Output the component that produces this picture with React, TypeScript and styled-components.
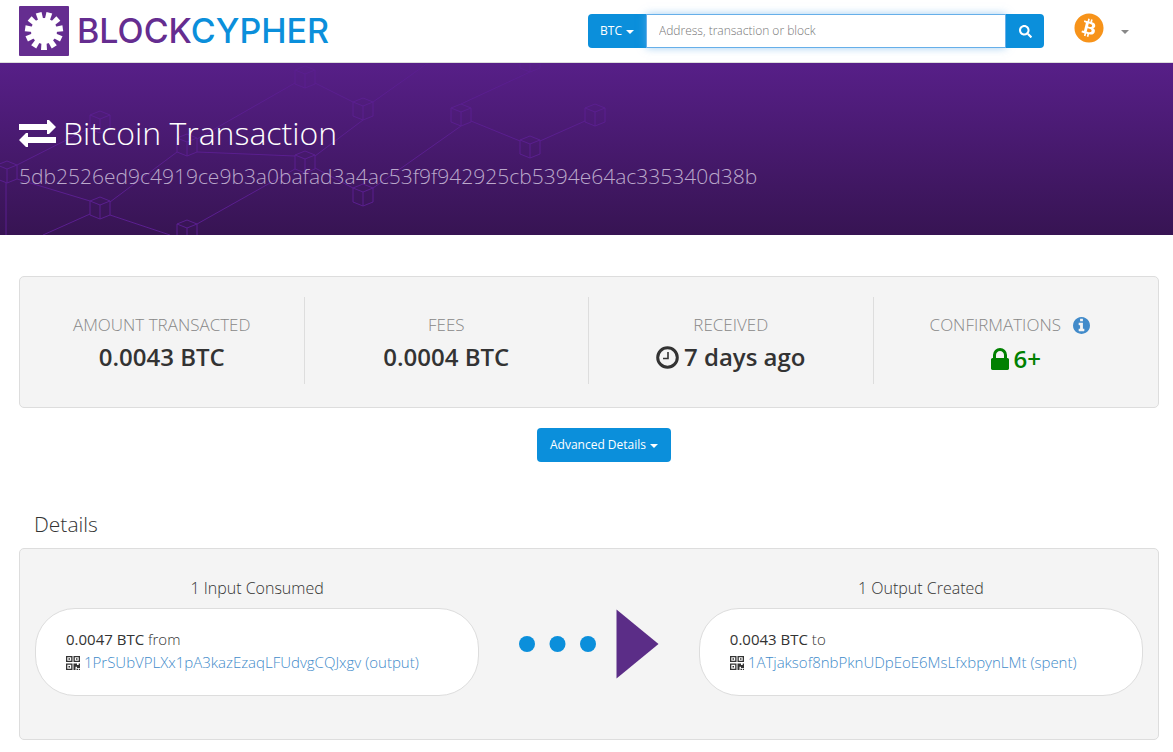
import React from "react";
import styled, { createGlobalStyle } from "styled-components";
import { FaBitcoin, FaSearch } from "react-icons/fa";

const blue = "#0b8fdb";
const purple = "#5b2d87";
const line = "#dddddd";
const link = "#428bca";

const GlobalStyle = createGlobalStyle`
  *, *::before, *::after { box-sizing: border-box; }
  body {
    margin: 0;
    background: #ffffff;
    color: #333333;
    font-family: "Open Sans", "Noto Sans", sans-serif;
    font-size: 15px;
    font-weight: 300;
    line-height: 22px;
  }
  h1, h2, h3, p, dl, dt, dd { margin: 0; font-weight: 300; }
  button, input { font: inherit; }
  a { color: ${link}; text-decoration: none; }
  svg { display: block; flex: none; }
`;

const Header = styled.header`
  display: flex;
  align-items: flex-start;
  height: 63px;
  padding: 6px 44px 0 19px;
  border-bottom: 1px solid ${line};
`;

const Brand = styled.a`
  display: flex;
  align-items: center;
  gap: 8px;
  margin-right: auto;
`;

const BrandName = styled.span`
  color: #652d90;
  font-family: Inter, sans-serif;
  font-size: 34px;
  font-weight: 500;
  line-height: 50px;
  white-space: nowrap;

  span { color: ${blue}; }
`;

const SearchForm = styled.form`
  display: flex;
  width: 456px;
  height: 34px;
  margin: 8px 30px 0 20px;
`;

const Button = styled.button`
  display: inline-flex;
  align-items: center;
  justify-content: center;
  gap: 4px;
  height: 34px;
  padding: 0 13px;
  border: 0;
  border-radius: 4px;
  background: ${blue};
  color: #ffffff;
  font-size: 12px;
  font-weight: 400;
  white-space: nowrap;
`;

const CurrencyButton = styled(Button)`
  width: 58px;
  border-radius: 4px 0 0 4px;
`;

const SubmitButton = styled(Button)`
  width: 38px;
  padding: 0 12px;
  border-radius: 0 4px 4px 0;
`;

const SearchInput = styled.input`
  flex: 1;
  min-width: 0;
  padding: 0 12px;
  border: 1px solid #66afe9;
  border-radius: 0;
  outline: 0;
  background: #ffffff;
  box-shadow: 0 0 8px rgba(102, 175, 233, 0.6);
  font-size: 12px;

  &::placeholder { color: #777777; opacity: 1; }
`;

const Caret = styled.span<{ $color?: string }>`
  margin-top: 2px;
  border-top: 4px solid ${(p) => p.$color ?? "currentColor"};
  border-right: 4px solid transparent;
  border-left: 4px solid transparent;
`;

const CoinMenu = styled.button`
  display: flex;
  align-items: center;
  gap: 17px;
  margin-top: 7px;
  padding: 0;
  border: 0;
  background: none;
  color: #f7931a;
`;

const CoinCaret = styled(Caret)`
  margin-top: 7px;
`;

const Hero = styled.section`
  position: relative;
  height: 172px;
  padding: 48px 19px 0;
  overflow: hidden;
  background: linear-gradient(#571f88, #371453);
`;

const HeroArt = styled.svg`
  position: absolute;
  top: 0;
  left: 0;
`;

const HeroTitle = styled.h1`
  position: relative;
  display: flex;
  align-items: center;
  gap: 7px;
  color: #ffffff;
  font-size: 32px;
  line-height: 44px;
`;

const Hash = styled.p`
  position: relative;
  margin-top: 5px;
  color: #bba9cb;
  font-size: 21px;
  line-height: 32px;
`;

const Main = styled.main`
  padding: 41px 14px 12px 19px;
`;

const Panel = styled.section`
  border: 1px solid ${line};
  border-radius: 5px;
  background: #f4f4f4;
`;

const Stats = styled(Panel).attrs({ as: "dl" })`
  display: grid;
  grid-template-columns: repeat(4, 1fr);
  padding: 20px 0 23px;
`;

const Stat = styled.div`
  height: 87px;
  padding-top: 16px;
  border-right: 1px solid ${line};
  text-align: center;

  &:last-child { border-right: 0; }
`;

const StatLabel = styled.dt<{ $withHint?: boolean }>`
  display: flex;
  align-items: center;
  justify-content: center;
  gap: 12px;
  padding: ${(p) => (p.$withHint ? "0 12px 2px 0" : "0")};
  color: #888888;
  font-size: 17px;
  line-height: 24px;
`;

const StatValue = styled.dd<{ $color?: string }>`
  display: flex;
  align-items: center;
  justify-content: center;
  gap: 5px;
  margin-top: 4px;
  color: ${(p) => p.$color ?? "#333333"};
  font-size: 24px;
  font-weight: 600;
  line-height: 32px;
`;

const Actions = styled.div`
  display: flex;
  justify-content: center;
  padding: 20px 0 0 30px;
`;

const SectionTitle = styled.h2`
  margin: 46px 0 8px;
  padding-left: 15px;
  font-size: 21px;
  line-height: 32px;
`;

const Flow = styled(Panel)`
  display: grid;
  grid-template-columns: 5fr 2fr 5fr;
  padding: 28px 0 43px;
`;

const Side = styled.div`
  padding: 0 15px;
`;

const SideTitle = styled.h3`
  margin-bottom: 9px;
  font-size: 16px;
  line-height: 22px;
  text-align: center;
`;

const Pill = styled.div`
  height: 88px;
  padding: 19px 30px 0;
  border: 1px solid ${line};
  border-radius: 40px;
  background: #ffffff;
  line-height: 23px;
  white-space: nowrap;

  strong { font-weight: 400; }
`;

const AddressRow = styled.div`
  display: flex;
  align-items: center;
  gap: 4px;
`;

const Arrow = styled.div`
  display: flex;
  justify-content: center;
  padding-top: 32px;
`;

const teeth = Array.from({ length: 11 }, (_, i) => 180 + (i * 360) / 11);

const LogoMark = () => (
  <svg width="50" height="50" viewBox="0 0 50 50" aria-hidden="true">
    <rect width="50" height="50" rx="1" fill="#652d90" />
    <g fill="#ffffff">
      <circle cx="25" cy="25" r="13" />
      {teeth.map((angle) => (
        <path key={angle} d="M22.500 14 L22 6 H28 L27.500 14 Z" transform={`rotate(${angle} 25 25)`} />
      ))}
    </g>
  </svg>
);

const cubes = [
  [305, 14], [363, 46], [100, 59], [187, 82], [7, 109], [305, 99], [100, 145],
  [363, 132], [187, 168], [461, 52], [530, 84], [595, 52], [530, -2],
];

const edges =
  "M17 102L90 65 M17 116L90 138 M6 120V172 M110 139L177 89 M197 89L295 93 M197 76L295 20 " +
  "M315 20L353 39 M373 39L428 0 M363 57L315 93 M315 105L353 125 M295 106L197 161 " +
  "M110 152L170 172 M90 151L43 172 M373 125L461 63 M461 41L530 9 M471 58L520 78 M540 78L585 58";

const NetworkArt = () => (
  <HeroArt width="640" height="172" viewBox="0 0 640 172" fill="none" stroke="#5a1f8f" aria-hidden="true">
    <path d={edges} />
    {cubes.map(([x, y]) => (
      <path
        key={`${x}-${y}`}
        transform={`translate(${x} ${y})`}
        d="M0 -11L10 -7V7L0 11L-10 7V-7ZM-10 -7L0 -3L10 -7M0 -3V11"
      />
    ))}
  </HeroArt>
);

const ExchangeIcon = () => (
  <svg width="37" height="27" viewBox="0 0 37 27" fill="#ffffff" aria-hidden="true">
    <path d="M0 4H28V0H30L37 7L30 14H28V10H0Z" />
    <path d="M37 17H9V13H7L0 20L7 27H9V23H37Z" />
  </svg>
);

const ClockIcon = () => (
  <svg width="23" height="23" viewBox="0 0 23 23" fill="none" stroke="#333333" aria-hidden="true">
    <circle cx="11.5" cy="11.5" r="9.8" strokeWidth="3" />
    <path d="M12 6V12.5H7" strokeWidth="1.6" />
  </svg>
);

const LockIcon = () => (
  <svg width="18" height="22" viewBox="0 128 1152 1408" fill="currentColor" aria-hidden="true">
    <path d="M320 768h512v-192q0-106-75-181t-181-75-181 75-75 181v192zm832 96v576q0 40-28 68t-68 28h-960q-40 0-68-28t-28-68v-576q0-40 28-68t68-28h32v-192q0-184 132-316t316-132 316 132 132 316v192h32q40 0 68 28t28 68z" />
  </svg>
);

const InfoIcon = () => (
  <svg width="17" height="17" viewBox="128 128 1536 1536" fill={link} aria-hidden="true">
    <path d="M1152 1376v-160q0-14-9-23t-23-9h-96v-512q0-14-9-23t-23-9h-320q-14 0-23 9t-9 23v160q0 14 9 23t23 9h96v320h-96q-14 0-23 9t-9 23v160q0 14 9 23t23 9h448q14 0 23-9t9-23zm-128-896v-160q0-14-9-23t-23-9h-192q-14 0-23 9t-9 23v160q0 14 9 23t23 9h192q14 0 23-9t9-23zm640 416q0 209-103 385.500t-279.500 279.500-385.500 103-385.500-103-279.500-279.500-103-385.500 103-385.500 279.500-279.500 385.500-103 385.500 103 279.500 279.500 103 385.500z" />
  </svg>
);

const QrIcon = () => (
  <svg width="14" height="14" viewBox="0 0 14 14" aria-hidden="true">
    <path
      fill="#333333"
      fillRule="evenodd"
      d="M0 0H6.500V6H0ZM1.300 1.300V4.700H5.200V1.300ZM7.500 0H14V6H7.500ZM8.800 1.300V4.700H12.700V1.300ZM0 7.500H6.500V14H0ZM1.300 8.800V12.700H5.200V8.800ZM2.500 2.300H4V3.700H2.500ZM10 2.300H11.500V3.700H10ZM2.500 10H4V11.500H2.500ZM7.500 7.500H11V9H12.700V7.500H14V12H11V10.700H9.500V14H7.500ZM10.500 12.800H12V14H10.500ZM12.800 12.800H14V14H12.800Z"
    />
  </svg>
);

const FlowArrow = () => (
  <svg width="140" height="70" viewBox="0 0 140 70" aria-hidden="true">
    <g fill={blue}>
      <circle cx="8" cy="35" r="8" />
      <circle cx="38.5" cy="35" r="8" />
      <circle cx="69" cy="35" r="8" />
    </g>
    <path fill={purple} d="M97.500 0.500L139.500 35L97.500 69.500Z" />
  </svg>
);

type TransferProps = { title: string; amount: string; word: string; address: string; note: string };

const Transfer = ({ title, amount, word, address, note }: TransferProps) => (
  <Side>
    <SideTitle>{title}</SideTitle>
    <Pill>
      <div><strong>{amount}</strong> {word}</div>
      <AddressRow>
        <QrIcon />
        <span><a href="#address">{address}</a> <a href="#transaction">({note})</a></span>
      </AddressRow>
    </Pill>
  </Side>
);

export default function App() {
  return (
    <>
      <GlobalStyle />
      <Header>
        <Brand href="#home">
          <LogoMark />
          <BrandName>BLOCK<span>CYPHER</span></BrandName>
        </Brand>
        <SearchForm role="search">
          <CurrencyButton type="button">BTC <Caret /></CurrencyButton>
          <SearchInput aria-label="Search" placeholder="Address, transaction or block" />
          <SubmitButton type="submit" aria-label="Search"><FaSearch size={13} /></SubmitButton>
        </SearchForm>
        <CoinMenu type="button" aria-label="Select coin">
          <FaBitcoin size={30} />
          <CoinCaret $color="#888888" />
        </CoinMenu>
      </Header>
      <Hero>
        <NetworkArt />
        <HeroTitle><ExchangeIcon />Bitcoin Transaction</HeroTitle>
        <Hash>5db2526ed9c4919ce9b3a0bafad3a4ac53f9f942925cb5394e64ac335340d38b</Hash>
      </Hero>
      <Main>
        <Stats>
          <Stat>
            <StatLabel>AMOUNT TRANSACTED</StatLabel>
            <StatValue>0.0043 BTC</StatValue>
          </Stat>
          <Stat>
            <StatLabel>FEES</StatLabel>
            <StatValue>0.0004 BTC</StatValue>
          </Stat>
          <Stat>
            <StatLabel>RECEIVED</StatLabel>
            <StatValue><ClockIcon />7 days ago</StatValue>
          </Stat>
          <Stat>
            <StatLabel $withHint>CONFIRMATIONS <InfoIcon /></StatLabel>
            <StatValue $color="#008000"><LockIcon />6+</StatValue>
          </Stat>
        </Stats>
        <Actions>
          <Button type="button">Advanced Details <Caret /></Button>
        </Actions>
        <SectionTitle>Details</SectionTitle>
        <Flow>
          <Transfer
            title="1 Input Consumed"
            amount="0.0047 BTC"
            word="from"
            address="1PrSUbVPLXx1pA3kazEzaqLFUdvgCQJxgv"
            note="output"
          />
          <Arrow><FlowArrow /></Arrow>
          <Transfer
            title="1 Output Created"
            amount="0.0043 BTC"
            word="to"
            address="1ATjaksof8nbPknUDpEoE6MsLfxbpynLMt"
            note="spent"
          />
        </Flow>
      </Main>
    </>
  );
}
